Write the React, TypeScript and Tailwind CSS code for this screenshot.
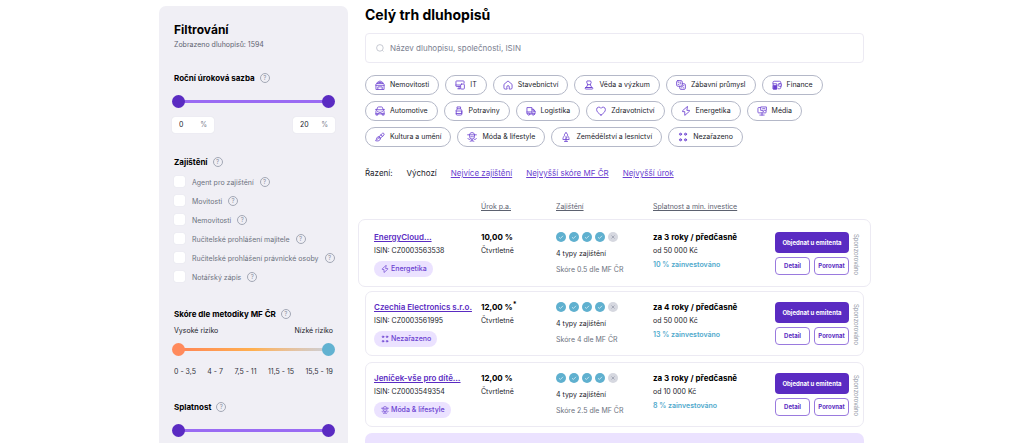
import React, { useState } from "react";

type IconName =
  | "building" | "devices" | "home" | "flask" | "dice" | "wallet" | "car" | "bottle"
  | "truck" | "heart" | "bolt" | "media" | "brush" | "fashion" | "tree" | "dots";

const shapes: Record<IconName, React.ReactNode> = {
  building: (
    <>
      <path d="M1.5 14.5V7l1-1.5h11l1 1.5v7.5zM3.5 5.5V4l4.500-2.500L12.500 4v1.500M1.500 8.500h13" />
      <path d="M4.500 14.500v-3.500h7v3.500M6 4h4" />
    </>
  ),
  devices: (
    <>
      <path d="M8 10.500H2.500a1 1 0 0 1-1-1v-7a1 1 0 0 1 1-1h11a1 1 0 0 1 1 1V5M4.500 14h4M6.500 10.500V14M1.500 8H8" />
      <rect x="9" y="6.500" width="6" height="8" rx="1.500" />
    </>
  ),
  home: <path d="M6 14.500H3.500a2 2 0 0 1-2-2V7L8 1.500 14.500 7v5.500a2 2 0 0 1-2 2H10V11a2 2 0 0 0-4 0z" />,
  flask: (
    <>
      <path d="M5.500 1.500h5l1 2.500-1.500 3.500L12.500 12h-9L6 7.500 4.500 4zM5.500 7.500h5" />
      <rect x="2" y="12" width="12" height="2.500" rx=".8" />
    </>
  ),
  dice: (
    <>
      <rect x="1" y="1" width="9" height="9" rx="2" />
      <path d="M10 6h3a2 2 0 0 1 2 2v5a2 2 0 0 1-2 2H8a2 2 0 0 1-2-2v-3" />
      <path d="M3.500 3.500h1M6.500 3.500h1M3.500 7h1M6.500 6h1M9 12.500h.5M12 12.500h.5M12 9h.5M9.500 10h1" />
    </>
  ),
  wallet: (
    <>
      <path d="M1.500 6V4a2 2 0 0 1 2-2h8.500a2 2 0 0 1 2 2v2M14 10v2a2 2 0 0 1-2 2h-2M11.500 6h3.500v4h-3.500a2 2 0 0 1 0-4z" />
      <path d="M2.500 6h5v8.500h-5z" />
      <path d="M2.500 9h5v5.500h-5z" fill="currentColor" />
    </>
  ),
  car: (
    <>
      <path d="M3 6l1-3.500a1.500 1.500 0 0 1 1.500-1h5a1.500 1.500 0 0 1 1.500 1L13 6M1 5.500h1.500M13.500 5.500H15" />
      <path d="M1.500 12V8.500A2.500 2.500 0 0 1 4 6h8a2.500 2.500 0 0 1 2.500 2.500V12zM1.500 12v2.500h3V12M11.500 12v2.500h3V12M4 9h1M11 9h1M6 12l.5-2h3l.5 2" />
    </>
  ),
  bottle: (
    <>
      <path d="M5.500 1.500h5v3h-5zM5.500 4.500L3.500 7v6a1.500 1.500 0 0 0 1.500 1.500h6a1.500 1.500 0 0 0 1.500-1.500V7l-2-2.500" />
      <path d="M3.500 8h9v4h-9" />
    </>
  ),
  truck: (
    <>
      <path d="M2.500 12.500h-1v-10h8v10H6.500M9.500 5H12l2.500 3.500v4h-1M1.500 9.500h8M11.500 5.500v3h3" />
      <circle cx="4.500" cy="13" r="1.700" />
      <circle cx="11.500" cy="13" r="1.700" />
    </>
  ),
  heart: <path d="M8 14.500C3.500 11.500 1 9 1 5.500A3.700 3.700 0 0 1 8 3.800a3.700 3.700 0 0 1 7 1.700c0 3.500-2.500 6-7 9z" />,
  bolt: <path d="M10 1L2.500 7.500v1.500H6V15l7.500-6.500V7H10z" />,
  media: (
    <>
      <path d="M5 2.500H2.500a1 1 0 0 0-1 1v6.500a1 1 0 0 0 1 1h11a1 1 0 0 0 1-1V8.500M8 11v3.500M4.500 14.500h7" />
      <path d="M6.500 1.500h8.500v5.500h-3L9.500 9V7h-3zM9 4.300h3.500" />
    </>
  ),
  brush: (
    <>
      <path d="M6.500 7.500L12 2a1.900 1.900 0 0 1 2.500 2.500L8.500 10zM9.500 4.500l2.500 2.500" />
      <path d="M6.500 7.500a3 3 0 0 0-3.500 2C2.500 11.500 2 12.500 1 14c2.500.5 5 .5 6.500-1a3 3 0 0 0 1-3zM3.500 12l2.500-2.500" />
    </>
  ),
  fashion: (
    <>
      <path d="M1 4.500h14M4 4.500C4 2.500 5.500 1 8 1s4 1.500 4 3.500v3A4 4 0 0 1 8 11.500a4 4 0 0 1-4-4z" />
      <path d="M1.500 10.500c1 1.500 2 1.500 3 1.500M15 10.500c-1 1.500-2 1.500-3 1.500M5 14.800c2-1 4-1 6 0M6 7.500h1.200M9 7.500h1.200M8 11.500V14" />
    </>
  ),
  tree: <path d="M8 1C6 2.500 5 4 5.500 6 4 7.500 3 9.500 3 12h10c0-2.500-1-4.500-2.500-6C11 4 10 2.500 8 1zM8 7v8M5.500 15h5M8 10l2-1.500" />,
  dots: (
    <g fill="currentColor" fillOpacity="0.5">
      <circle cx="4" cy="3.500" r="1.700" />
      <circle cx="12" cy="3.500" r="1.700" />
      <circle cx="4" cy="12.500" r="1.700" />
      <circle cx="12" cy="12.500" r="1.700" />
    </g>
  ),
};

function Icon({ name, className }: { name: IconName; className: string }) {
  return (
    <svg
      viewBox="0 0 16 16"
      fill="none"
      stroke="currentColor"
      strokeWidth="1.3"
      strokeLinecap="round"
      strokeLinejoin="round"
      aria-hidden="true"
      className={`shrink-0 ${className}`}
    >
      {shapes[name]}
    </svg>
  );
}

function Help({ label }: { label: string }) {
  return (
    <button
      type="button"
      aria-label={`Nápověda: ${label}`}
      className="flex size-[10px] shrink-0 items-center justify-center rounded-full border border-[#a3a8b5] text-[6px] leading-none text-[#8d93a3]"
    >
      ?
    </button>
  );
}

function Heading({ children }: { children: string }) {
  return (
    <div className="flex h-3 items-center gap-[5px] px-[2px]">
      <h3 className="text-[8px] leading-3 font-bold text-black">{children}</h3>
      <Help label={children} />
    </div>
  );
}

const thumb =
  "pointer-events-none absolute inset-0 h-[14px] w-full appearance-none bg-transparent [&::-webkit-slider-thumb]:pointer-events-auto [&::-webkit-slider-thumb]:size-[13px] [&::-webkit-slider-thumb]:appearance-none [&::-webkit-slider-thumb]:rounded-full";

function RangeSlider({ label, risk }: { label: string; risk?: boolean }) {
  const track = risk
    ? "bg-linear-to-r from-[#ff8355] via-[#ffb04f] via-50% to-[#c9d0dc]"
    : "bg-[#9a6bf3]";
  const low = risk ? "[&::-webkit-slider-thumb]:bg-[#ff8a5c]" : "[&::-webkit-slider-thumb]:bg-[#5a2bc2]";
  const high = risk ? "[&::-webkit-slider-thumb]:bg-[#62b2d1]" : "[&::-webkit-slider-thumb]:bg-[#5a2bc2]";
  return (
    <div className="relative flex h-[14px] items-center">
      <div className={`mx-1 h-[3px] flex-1 ${track}`} />
      <input type="range" min={0} max={20} defaultValue={0} aria-label={`${label} od`} className={`${thumb} ${low}`} />
      <input type="range" min={0} max={20} defaultValue={20} aria-label={`${label} do`} className={`${thumb} ${high}`} />
    </div>
  );
}

function PercentField({ label, value }: { label: string; value: string }) {
  return (
    <label className="flex h-4 w-[42px] items-center rounded-[3px] bg-white px-[7px] text-[7px] shadow-[0_0_1px_#cfd2dc]">
      <input aria-label={label} defaultValue={value} className="w-full min-w-0 text-[#22232b] outline-none" />
      <span className="text-[#7b8191]">%</span>
    </label>
  );
}

const securities = [
  "Agent pro zajištění",
  "Movitosti",
  "Nemovitosti",
  "Ručitelské prohlášení majitele",
  "Ručitelské prohlášení právnické osoby",
  "Notářský zápis",
];

function Sidebar() {
  return (
    <aside className="mt-[6px] w-[189px] shrink-0 rounded-t-[7px] bg-[#f0eff5] px-[13px] pt-4">
      <h2 className="px-[2px] text-[12px] leading-4 font-bold text-black">Filtrování</h2>
      <p className="mt-[2px] px-[2px] text-[7px] leading-[10px] text-[#5d6270]">Zobrazeno dluhopisů: 1594</p>

      <section className="mt-[22px]">
        <Heading>Roční úroková sazba</Heading>
        <div className="mt-[10px]">
          <RangeSlider label="Úroková sazba" />
        </div>
        <div className="mt-[9px] flex justify-between">
          <PercentField label="Sazba od" value="0" />
          <PercentField label="Sazba do" value="20" />
        </div>
      </section>

      <section className="mt-[23px]">
        <Heading>Zajištění</Heading>
        <ul className="mt-1">
          {securities.map((name, i) => (
            <li key={name} className="flex h-[19px] items-center gap-[6px] px-[2px]">
              <input
                id={`security-${i}`}
                type="checkbox"
                className="size-[11px] shrink-0 appearance-none rounded-[2px] bg-white shadow-[0_0_1px_#cfd2dc] checked:bg-[#5a2bc2]"
              />
              <label htmlFor={`security-${i}`} className="pt-[2px] pl-px text-[7px] leading-[10px] whitespace-nowrap text-[#6c7280]">
                {name}
              </label>
              <Help label={name} />
            </li>
          ))}
        </ul>
      </section>

      <section className="mt-[22px]">
        <Heading>Skóre dle metodiky MF ČR</Heading>
        <div className="mt-[6px] flex justify-between px-[2px] text-[7px] leading-[10px] text-[#22232b]">
          <span>Vysoké riziko</span>
          <span>Nízké riziko</span>
        </div>
        <div className="mt-[6px]">
          <RangeSlider label="Skóre" risk />
        </div>
        <div className="mt-[11px] flex justify-between px-[2px] text-[7px] leading-[10px] text-[#30323c]">
          <span>0 - 3,5</span>
          <span>4 - 7</span>
          <span>7,5 - 11</span>
          <span>11,5 - 15</span>
          <span>15,5 - 19</span>
        </div>
      </section>

      <section className="mt-6">
        <Heading>Splatnost</Heading>
        <div className="mt-[10px]">
          <RangeSlider label="Splatnost" />
        </div>
      </section>
    </aside>
  );
}

const categoryRows: { icon: IconName; name: string }[][] = [
  [
    { icon: "building", name: "Nemovitosti" },
    { icon: "devices", name: "IT" },
    { icon: "home", name: "Stavebnictví" },
    { icon: "flask", name: "Věda a výzkum" },
    { icon: "dice", name: "Zábavní průmysl" },
    { icon: "wallet", name: "Finance" },
  ],
  [
    { icon: "car", name: "Automotive" },
    { icon: "bottle", name: "Potraviny" },
    { icon: "truck", name: "Logistika" },
    { icon: "heart", name: "Zdravotnictví" },
    { icon: "bolt", name: "Energetika" },
    { icon: "media", name: "Média" },
  ],
  [
    { icon: "brush", name: "Kultura a umění" },
    { icon: "fashion", name: "Móda & lifestyle" },
    { icon: "tree", name: "Zemědělství a lesnictví" },
    { icon: "dots", name: "Nezařazeno" },
  ],
];

function Categories() {
  return (
    <div className="mt-3 flex flex-col gap-[6px]">
      {categoryRows.map((row) => (
        <div key={row[0].name} className="flex flex-wrap gap-[6px]">
          {row.map(({ icon, name }) => (
            <button
              key={name}
              type="button"
              className="flex h-5 items-center gap-[5px] rounded-full border border-[#b4b8c8] px-[9px] text-[7px] whitespace-nowrap text-[#22232b]"
            >
              <Icon name={icon} className="size-[10px] text-[#6a3fd0]" />
              {name}
            </button>
          ))}
        </div>
      ))}
    </div>
  );
}

interface Bond {
  name: string;
  isin: string;
  icon: IconName;
  category: string;
  rate: string;
  note?: string;
  score: string;
  term: string;
  minimum: string;
  invested: string;
  featured?: boolean;
}

const bonds: Bond[] = [
  { name: "EnergyCloud…", isin: "CZ0003563538", icon: "bolt", category: "Energetika", rate: "10,00 %", score: "0.5", term: "za 3 roky / předčasně", minimum: "od 50 000 Kč", invested: "10 % zainvestováno", featured: true },
  { name: "Czechia Electronics s.r.o.", isin: "CZ0003561995", icon: "dots", category: "Nezařazeno", rate: "12,00 %", note: "*", score: "4", term: "za 4 roky / předčasně", minimum: "od 50 000 Kč", invested: "13 % zainvestováno" },
  { name: "Jeníček-vše pro dítě…", isin: "CZ0003549354", icon: "fashion", category: "Móda & lifestyle", rate: "12,00 %", score: "2.5", term: "za 3 roky / předčasně", minimum: "od 10 000 Kč", invested: "8 % zainvestováno" },
];

function SecurityDots() {
  return (
    <div className="flex h-3 items-center gap-[3px]" role="img" aria-label="4 z 5">
      {[true, true, true, true, false].map((on, i) => (
        <svg key={i} viewBox="0 0 10 10" className="size-[10px] shrink-0" fill="none" strokeWidth="0.8">
          <circle cx="5" cy="5" r="5" fill={on ? "#5fb0cf" : "#d6d8e0"} />
          {on ? <path d="M3 5.200l1.400 1.300L7 3.800" stroke="#d9eef6" /> : <path d="M3.500 3.500l3 3M6.500 3.500l-3 3" stroke="#9a9fae" />}
        </svg>
      ))}
    </div>
  );
}

const columns = "grid grid-cols-[107px_75px_97px_1fr_74px_10px]";

function BondCard({ bond }: { bond: Bond }) {
  const frame = bond.featured ? "-mx-[7px] mb-1 h-[68px] pt-[11px] pr-[11px] pl-[15px]" : "mb-[6px] h-[65px] pt-[9px] pr-1 pl-2";
  return (
    <article className={`${columns} rounded-[7px] border border-[#eceaf3] text-[7px] leading-[10px] text-[#22232b] ${frame}`}>
      <div>
        <h3 className="text-[8px] leading-3 font-semibold whitespace-nowrap">
          <a href="#detail" className="text-[#5a2bc2] underline">{bond.name}</a>
        </h3>
        <p className="mt-[3px]">ISIN: {bond.isin}</p>
        <span className="mt-[5px] inline-flex h-4 items-center gap-[2px] rounded-full bg-[#ebe2ff] pr-[6px] pl-[7px] font-medium text-[#6a3fd0]">
          <Icon name={bond.icon} className="size-2" />
          {bond.category}
        </span>
      </div>
      <div>
        <p className="h-3 text-[8px] leading-3 font-bold text-black">
          {bond.rate}
          {bond.note && <sup className="text-[7px] leading-none">{bond.note}</sup>}
        </p>
        <p className="mt-[3px]">Čtvrtletně</p>
      </div>
      <div>
        <SecurityDots />
        <p className="mt-[6px]">4 typy zajištění</p>
        <p className="mt-[6px] text-[#6c7280]">Skóre {bond.score} dle MF ČR</p>
      </div>
      <div>
        <p className="text-[8px] leading-3 font-bold whitespace-nowrap text-black">{bond.term}</p>
        <p className="mt-[3px]">{bond.minimum}</p>
        <p className="mt-1 font-semibold text-[#4fa9cc]">{bond.invested}</p>
      </div>
      <div className="mt-px grid grid-cols-2 content-start gap-[4px] text-[6px] font-bold">
        <button type="button" className="col-span-2 h-[21px] rounded-[4px] bg-[#5a2bc2] whitespace-nowrap text-white">
          Objednat u emitenta
        </button>
        <button type="button" className="h-[18px] rounded-[4px] border border-[#9a7ade] text-[#5a2bc2]">Detail</button>
        <button type="button" className="h-[18px] rounded-[4px] border border-[#9a7ade] text-[#5a2bc2]">Porovnat</button>
      </div>
      <span className="mt-[3px] justify-self-end text-[6px] leading-[6px] text-[#8d93a3] [writing-mode:vertical-rl]">Sponzorováno</span>
    </article>
  );
}

export default function App() {
  const [query, setQuery] = useState("");
  return (
    <div className="h-screen overflow-hidden bg-white font-['Inter','Noto_Sans',sans-serif] text-[#22232b]">
      <div className="mx-auto flex h-full max-w-[706px] gap-[17px] pr-px">
        <Sidebar />
        <main className="min-w-0 flex-1 pt-[5px]">
          <h1 className="text-[14px] leading-5 font-bold text-black">Celý trh dluhopisů</h1>
          <label className="mt-2 flex h-[30px] items-center gap-[6px] rounded-[4px] border border-[#eceaf3] px-[10px]">
            <svg viewBox="0 0 8 8" className="size-2 shrink-0" fill="none" stroke="#b9bcc8" strokeWidth="0.8" aria-hidden="true">
              <circle cx="3.900" cy="3.900" r="3.300" />
              <path d="M6.300 6.300l1.200 1.200" />
            </svg>
            <input
              type="search"
              aria-label="Hledat dluhopis"
              value={query}
              onChange={(e) => setQuery(e.target.value)}
              placeholder="Název dluhopisu, společnosti, ISIN"
              className="w-full text-[8px] outline-none placeholder:text-[#7b8191]"
            />
          </label>
          <Categories />
          <div className="mt-5 flex h-3 items-center gap-[14px] text-[8px] leading-3 whitespace-nowrap">
            <span>Řazení:</span>
            <button type="button">Výchozí</button>
            <a href="#security" className="text-[#6a3fd0] underline">Nejvíce zajištění</a>
            <a href="#score" className="text-[#6a3fd0] underline">Nejvyšší skóre MF ČR</a>
            <a href="#rate" className="text-[#6a3fd0] underline">Nejvyšší úrok</a>
          </div>
          <div className={`${columns} mt-[23px] mb-[7px] pr-[5px] pl-[9px] text-[7px] leading-[10px] text-[#5d6270] underline`}>
            <span className="col-start-2">Úrok p.a.</span>
            <span>Zajištění</span>
            <span>Splatnost a min. investice</span>
          </div>
          {bonds.map((bond) => (
            <BondCard key={bond.isin} bond={bond} />
          ))}
          <div className="h-16 rounded-[7px] bg-[#ebe2ff]" />
        </main>
      </div>
    </div>
  );
}
